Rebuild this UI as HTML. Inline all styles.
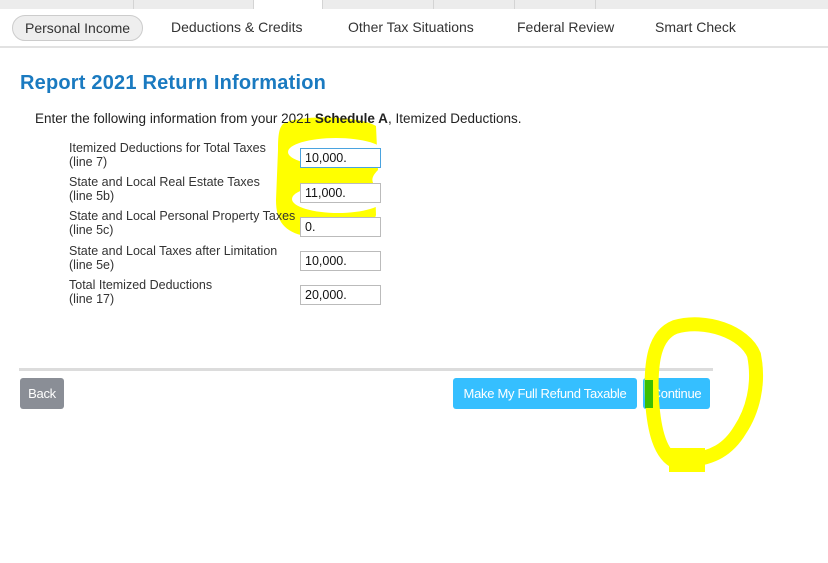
<!DOCTYPE html>
<html><head><style>
body{margin:0;width:828px;height:563px;background:#fff;font-family:"Liberation Sans",Arial,sans-serif;position:relative;overflow:hidden}
.top{position:absolute;left:0;top:0;width:828px;height:9px;background:#ececec}
.top i{position:absolute;top:0;width:1px;height:9px;background:#d4d4d4}
.nav{position:absolute;top:15px;left:0;width:828px;height:31px;border-bottom:2px solid #e2e2e2}
.nav span{position:absolute;top:0;font-size:14px;color:#333;line-height:24px}
.pill{background:#eeeeee;border:1px solid #ccc;border-radius:13px;padding:0 12px}
h1{position:absolute;left:20px;top:72px;margin:0;font-size:20px;color:#1a7ac0;font-weight:bold;letter-spacing:0.2px}
.intro{position:absolute;left:35px;top:111px;font-size:13.5px;color:#222;z-index:5}
.lbl{position:absolute;left:69px;font-size:12.5px;color:#333;line-height:14px;z-index:5}
.inp{position:absolute;left:300px;border:1px solid #bbb;font-size:12.5px;line-height:18px;padding-left:4px;box-sizing:border-box;width:81px;height:20px;background:#fff;color:#111;z-index:3}
.hr{position:absolute;left:19px;top:368px;width:694px;height:3px;background:#dcdcdc}
.btn{position:absolute;top:378px;height:31px;line-height:31px;color:#fff;font-size:13px;border-radius:3px;text-align:center;letter-spacing:-0.3px}
svg{position:absolute;left:0;top:0;z-index:2}
</style></head><body>
<div class="top"><i style="left:133px"></i><div style="position:absolute;left:253px;top:0;width:69px;height:9px;background:#fff"></div><i style="left:253px"></i><i style="left:322px"></i><i style="left:433px"></i><i style="left:514px"></i><i style="left:595px"></i></div>
<div class="nav">
<span class="pill" style="left:12px">Personal Income</span>
<span style="left:171px">Deductions &amp; Credits</span>
<span style="left:348px">Other Tax Situations</span>
<span style="left:517px">Federal Review</span>
<span style="left:655px">Smart Check</span>
</div>
<h1>Report 2021 Return Information</h1>
<div class="intro">Enter the following information from your 2021 <b>Schedule A</b>, Itemized Deductions.</div>
<div class="lbl" style="top:141px">Itemized Deductions for Total Taxes<br>(line 7)</div>
<div class="lbl" style="top:175px">State and Local Real Estate Taxes<br>(line 5b)</div>
<div class="lbl" style="top:209px">State and Local Personal Property Taxes<br>(line 5c)</div>
<div class="lbl" style="top:244px">State and Local Taxes after Limitation<br>(line 5e)</div>
<div class="lbl" style="top:278px">Total Itemized Deductions<br>(line 17)</div>
<svg width="828" height="563">
<path d="M283,124 C300,114 360,116 376,126 L378,170 C370,178 372,182 375,186 L376,215 C372,232 340,240 305,236 C285,232 276,222 276,200 L278,150 C278,135 279,128 283,124 Z" fill="#ffff00"/>
<ellipse cx="336" cy="152" rx="48" ry="14" fill="#fff"/>
<ellipse cx="338" cy="199" rx="46" ry="14" fill="#fff"/>
</svg>
<div class="inp" style="top:148px;border-color:#4aa3df">10,000.</div>
<div class="inp" style="top:183px">11,000.</div>
<div class="inp" style="top:217px">0.</div>
<div class="inp" style="top:251px">10,000.</div>
<div class="inp" style="top:285px">20,000.</div>
<div class="hr"></div>
<div class="btn" style="left:20px;width:44px;background:#8a8e96">Back</div>
<div class="btn" style="left:453px;width:184px;background:#35bfff">Make My Full Refund Taxable</div>
<div class="btn" style="left:643px;width:67px;background:#35bfff">Continue</div>
<svg width="828" height="563" style="z-index:4">
<path d="M676,462 C660,455 654,430 652,400 C650,360 655,335 675,327 C705,318 745,332 754,355 C760,385 752,412 740,430 C728,450 712,458 690,460" fill="none" stroke="#ffff00" stroke-width="14"/>
<rect x="669" y="448" width="36" height="24" fill="#ffff00"/>
<rect x="645" y="380" width="8" height="28" fill="#3dbf00"/>
</svg>
</body></html>
